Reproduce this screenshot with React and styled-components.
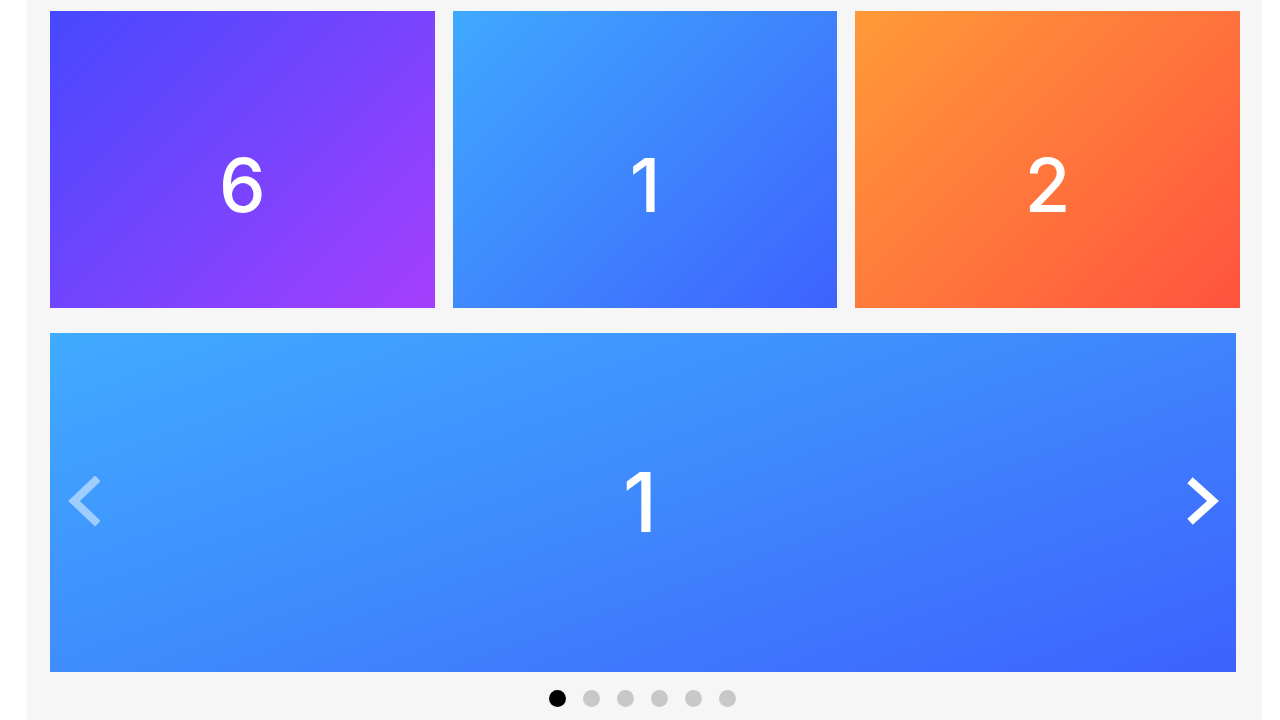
import React, { useState } from "react";
import styled, { createGlobalStyle } from "styled-components";

const slides = [
  { n: 6, from: "#4649ff", to: "#a53ffc" },
  { n: 1, from: "#3fa9ff", to: "#3e62fd" },
  { n: 2, from: "#ff9a38", to: "#ff533f" },
];

function App() {
  const [active] = useState(0);

  return (
    <>
      <GlobalStyle />
      <Panel>
        <Row>
          {slides.map((s) => (
            <Card key={s.n} from={s.from} to={s.to}>
              <Number>{s.n}</Number>
            </Card>
          ))}
        </Row>
        <Banner>
          <Arrow side="left" faded>
            <svg width="34" height="50" viewBox="0 0 34 50">
              <polyline points="29,5 8,25 29,45" />
            </svg>
          </Arrow>
          <BigNumber>1</BigNumber>
          <Arrow side="right">
            <svg width="34" height="50" viewBox="0 0 34 50">
              <polyline points="6,7 26,25 6,43" />
            </svg>
          </Arrow>
        </Banner>
        <Dots>
          {[0, 1, 2, 3, 4, 5].map((i) => (
            <Dot key={i} active={i === active} />
          ))}
        </Dots>
      </Panel>
    </>
  );
}

export default App;

const GlobalStyle = createGlobalStyle`
  html, body {
    margin: 0;
    padding: 0;
    background: #ffffff;
    font-family: Inter, "Liberation Sans", Arial, sans-serif;
  }
`;

const Panel = styled.div`
  width: 1235px;
  height: 720px;
  margin-left: 27px;
  background-color: #f6f6f6;
  padding: 11px 22px 0 23px;
  box-sizing: border-box;
  display: flex;
  flex-direction: column;
`;

const Row = styled.div`
  display: grid;
  grid-template-columns: repeat(3, 1fr);
  gap: 18px;
  height: 297px;
`;

const Card = styled.div`
  background: linear-gradient(135deg, ${(p) => p.from}, ${(p) => p.to});
  display: flex;
  justify-content: center;
  align-items: center;
  padding-top: 50px;
  box-sizing: border-box;
`;

const Number = styled.span`
  color: #ffffff;
  font-size: 74px;
  font-weight: 500;
  line-height: 1;
`;

const Banner = styled.div`
  position: relative;
  margin-top: 25px;
  margin-right: 4px;
  height: 339px;
  background: linear-gradient(160deg, #40abff 0%, #3f8cfd 45%, #3d62fd 100%);
  display: flex;
  justify-content: center;
  align-items: center;
`;

const BigNumber = styled.span`
  color: #ffffff;
  font-size: 82px;
  font-weight: 500;
  line-height: 1;
  margin-right: 6px;
`;

const Arrow = styled.div`
  position: absolute;
  top: 143px;
  ${(p) => (p.side === "left" ? "left: 16px;" : "right: 15px;")}
  width: 34px;
  height: 50px;
  & svg polyline {
    fill: none;
    stroke: ${(p) => (p.faded ? "rgba(255, 255, 255, 0.5)" : "#ffffff")};
    stroke-width: 8;
    stroke-linecap: square;
    stroke-linejoin: miter;
  }
`;

const Dots = styled.div`
  display: flex;
  justify-content: center;
  gap: 17px;
  margin-top: 18px;
  margin-right: 5px;
`;

const Dot = styled.div`
  width: 17px;
  height: 17px;
  border-radius: 50%;
  background-color: ${(p) => (p.active ? "#000000" : "#c8c8c8")};
`;
